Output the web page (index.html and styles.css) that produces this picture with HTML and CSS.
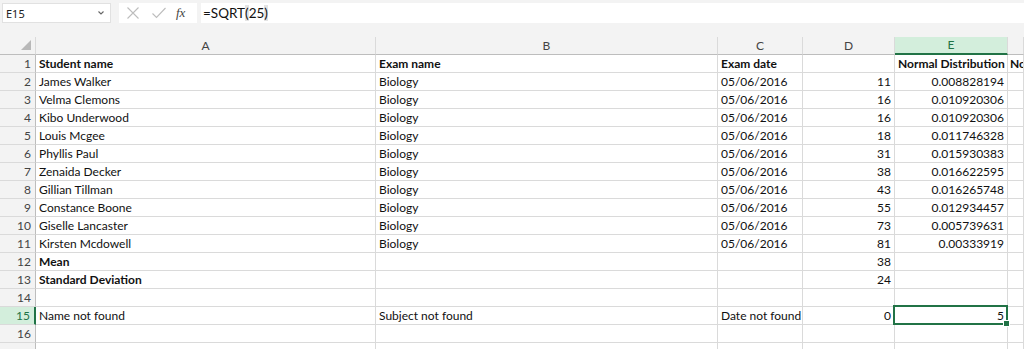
FILE: index.html
```html
<!DOCTYPE html>
<html lang="en">
<head>
<meta charset="utf-8">
<title>Sheet</title>
<link rel="stylesheet" href="styles.css">
</head>
<body>
<div class="app">
  <div class="fbar">
    <div class="namebox">
      <span class="ref">E15</span>
      <svg class="chev" width="8" height="6" viewBox="0 0 8 6"><path d="M1.5 1.5 L4 4 L6.5 1.5" fill="none" stroke="#666" stroke-width="1.1"/></svg>
    </div>
    <div class="btns">
      <svg class="ico" width="14" height="14" viewBox="0 0 14 14"><path d="M1.5 1.5 L12.5 12.5 M12.5 1.5 L1.5 12.5" stroke="#bdbdbd" stroke-width="1.1" fill="none"/></svg>
      <svg class="ico" width="16" height="14" viewBox="0 0 16 14"><path d="M1.5 7.5 L5.5 11.5 L14.5 2" stroke="#bdbdbd" stroke-width="1.1" fill="none"/></svg>
      <span class="fx">fx</span>
    </div>
    <div class="formula">=SQRT<span class="paren">(</span>25<span class="paren">)</span></div>
  </div>
  <div class="gap"></div>
  <div class="sheet">
    <div class="ch corner"><span class="tri"></span></div>
    <div class="ch">A</div>
    <div class="ch">B</div>
    <div class="ch">C</div>
    <div class="ch">D</div>
    <div class="ch sel">E</div>
    <div class="ch"></div>

    <div class="rh">1</div><div class="c b">Student name</div><div class="c b">Exam name</div><div class="c b">Exam date</div><div class="c"></div><div class="c b n">Normal Distribution</div><div class="c b clip">No</div>
    <div class="rh">2</div><div class="c">James Walker</div><div class="c">Biology</div><div class="c">05/06/2016</div><div class="c n">11</div><div class="c n">0.008828194</div><div class="c"></div>
    <div class="rh">3</div><div class="c">Velma Clemons</div><div class="c">Biology</div><div class="c">05/06/2016</div><div class="c n">16</div><div class="c n">0.010920306</div><div class="c"></div>
    <div class="rh">4</div><div class="c">Kibo Underwood</div><div class="c">Biology</div><div class="c">05/06/2016</div><div class="c n">16</div><div class="c n">0.010920306</div><div class="c"></div>
    <div class="rh">5</div><div class="c">Louis Mcgee</div><div class="c">Biology</div><div class="c">05/06/2016</div><div class="c n">18</div><div class="c n">0.011746328</div><div class="c"></div>
    <div class="rh">6</div><div class="c">Phyllis Paul</div><div class="c">Biology</div><div class="c">05/06/2016</div><div class="c n">31</div><div class="c n">0.015930383</div><div class="c"></div>
    <div class="rh">7</div><div class="c">Zenaida Decker</div><div class="c">Biology</div><div class="c">05/06/2016</div><div class="c n">38</div><div class="c n">0.016622595</div><div class="c"></div>
    <div class="rh">8</div><div class="c">Gillian Tillman</div><div class="c">Biology</div><div class="c">05/06/2016</div><div class="c n">43</div><div class="c n">0.016265748</div><div class="c"></div>
    <div class="rh">9</div><div class="c">Constance Boone</div><div class="c">Biology</div><div class="c">05/06/2016</div><div class="c n">55</div><div class="c n">0.012934457</div><div class="c"></div>
    <div class="rh">10</div><div class="c">Giselle Lancaster</div><div class="c">Biology</div><div class="c">05/06/2016</div><div class="c n">73</div><div class="c n">0.005739631</div><div class="c"></div>
    <div class="rh">11</div><div class="c">Kirsten Mcdowell</div><div class="c">Biology</div><div class="c">05/06/2016</div><div class="c n">81</div><div class="c n">0.00333919</div><div class="c"></div>
    <div class="rh">12</div><div class="c b">Mean</div><div class="c"></div><div class="c"></div><div class="c n">38</div><div class="c"></div><div class="c"></div>
    <div class="rh">13</div><div class="c b">Standard Deviation</div><div class="c"></div><div class="c"></div><div class="c n">24</div><div class="c"></div><div class="c"></div>
    <div class="rh">14</div><div class="c"></div><div class="c"></div><div class="c"></div><div class="c"></div><div class="c"></div><div class="c"></div>
    <div class="rh rsel">15</div><div class="c">Name not found</div><div class="c">Subject not found</div><div class="c">Date not found</div><div class="c n">0</div><div class="c n active">5<span class="selbox"></span><span class="handle"></span></div><div class="c"></div>
    <div class="rh">16</div><div class="c"></div><div class="c"></div><div class="c"></div><div class="c"></div><div class="c"></div><div class="c"></div>
    <div class="rh"></div><div class="c"></div><div class="c"></div><div class="c"></div><div class="c"></div><div class="c"></div><div class="c"></div>
  </div>
</div>
</body>
</html>
```

FILE: styles.css
```css
html, body {
  margin: 0;
  padding: 0;
  background: #ffffff;
  overflow: hidden;
}
.app {
  width: 1024px;
  height: 349px;
  overflow: hidden;
  background: #f3f3f3;
  font-family: "Lato", "Open Sans", sans-serif;
}
.fbar {
  display: flex;
  align-items: stretch;
  height: 20px;
  padding: 3px 0 0 2px;
}
.namebox {
  width: 109px;
  box-sizing: border-box;
  background: #fff;
  border: 1px solid #e1e1e1;
  display: flex;
  align-items: center;
  justify-content: space-between;
  padding: 0 5px 0 3px;
}
.ref {
  font-family: "Noto Sans", sans-serif;
  font-size: 11px;
  color: #222;
}
.btns {
  margin-left: 8px;
  width: 78px;
  box-sizing: border-box;
  background: #fff;
  display: flex;
  align-items: center;
  padding-left: 7px;
  gap: 11px;
}
.ico { display: block; }
.fx {
  font-family: "Liberation Serif", serif;
  font-style: italic;
  font-size: 13px;
  color: #444;
  margin-left: -2px;
}
.formula {
  margin-left: 4px;
  flex: 1;
  background: #fff;
  font-size: 13.5px;
  color: #111;
  display: flex;
  align-items: center;
  padding-left: 2px;
  white-space: pre;
}
.paren {
  background: #e4e4e4;
}
.gap { height: 14px; }

.sheet {
  display: grid;
  grid-template-columns: 36px 340px 342px 85px 92px 113px 16px;
  grid-auto-rows: 18px;
  background: #fff;
  font-size: 12px;
  color: #111;
}
.ch {
  background: #f3f3f3;
  border-right: 1px solid #dadada;
  border-bottom: 1px solid #bdbdbd;
  color: #444;
  text-align: center;
  line-height: 17px;
  font-size: 12px;
  box-sizing: border-box;
}
.corner { position: relative; }
.tri {
  position: absolute;
  right: 4px;
  bottom: 4px;
  width: 0;
  height: 0;
  border-left: 10px solid transparent;
  border-bottom: 10px solid #b8b8b8;
}
.ch.sel {
  background: #d3eedc;
  color: #217346;
  border-bottom: 2px solid #217346;
  line-height: 16px;
}
.rh {
  background: #f3f3f3;
  border-right: 1px solid #bdbdbd;
  border-bottom: 1px solid #dadada;
  color: #444;
  text-align: right;
  padding-right: 4px;
  line-height: 18px;
  box-sizing: border-box;
}
.rh.rsel {
  background: #d3eedc;
  color: #217346;
  border-right: 2px solid #217346;
}
.c {
  border-right: 1px solid #dadada;
  border-bottom: 1px solid #dadada;
  padding: 0 3px;
  line-height: 18px;
  white-space: nowrap;
  overflow: hidden;
  box-sizing: border-box;
}
.c.b { font-weight: 700; }
.c.n { text-align: right; }
.c.clip { padding: 0 0 0 2px; }
.c.active {
  position: relative;
  overflow: visible;
}
.selbox {
  position: absolute;
  left: -2px;
  top: -2px;
  right: -1px;
  bottom: -1px;
  border: 2px solid #217346;
  pointer-events: none;
}
.handle {
  position: absolute;
  right: -3px;
  bottom: -3px;
  width: 5px;
  height: 5px;
  background: #217346;
  border: 1px solid #fff;
}
```
